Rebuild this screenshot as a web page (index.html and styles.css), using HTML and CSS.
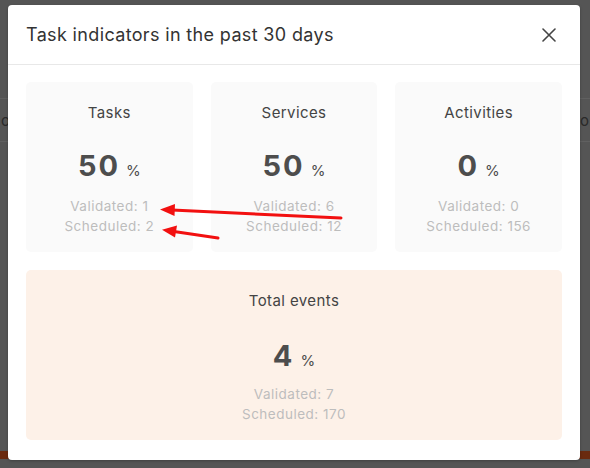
FILE: index.html
```html
<!DOCTYPE html>
<html lang="en">
<head>
<meta charset="utf-8">
<title>Task indicators</title>
<link rel="stylesheet" href="styles.css">
</head>
<body>
<div class="backdrop">
  <div class="bg-top"></div>
  <div class="bg-row"><span class="bg-text-left">oc</span><span class="bg-text-right">o</span></div>
  <div class="bg-fill"></div>
  <div class="bg-band"></div>
</div>

<div class="modal">
  <div class="modal-header">
    <h1 class="modal-title">Task indicators in the past 30 days</h1>
    <button class="close-btn" aria-label="Close">
      <svg width="14" height="14" viewBox="0 0 14 14"><path d="M1 1 L13 13 M13 1 L1 13" stroke="#444" stroke-width="1.6" fill="none" stroke-linecap="round"/></svg>
    </button>
  </div>
  <div class="modal-body">
    <div class="card">
      <div class="card-title">Tasks</div>
      <div class="card-value"><span class="num">50</span><span class="pct">%</span></div>
      <div class="card-stat">Validated: 1</div>
      <div class="card-stat">Scheduled: 2</div>
    </div>
    <div class="card">
      <div class="card-title">Services</div>
      <div class="card-value"><span class="num">50</span><span class="pct">%</span></div>
      <div class="card-stat">Validated: 6</div>
      <div class="card-stat">Scheduled: 12</div>
    </div>
    <div class="card">
      <div class="card-title">Activities</div>
      <div class="card-value"><span class="num">0</span><span class="pct">%</span></div>
      <div class="card-stat">Validated: 0</div>
      <div class="card-stat">Scheduled: 156</div>
    </div>
    <div class="card card-total">
      <div class="card-title">Total events</div>
      <div class="card-value"><span class="num">4</span><span class="pct">%</span></div>
      <div class="card-stat">Validated: 7</div>
      <div class="card-stat">Scheduled: 170</div>
    </div>
  </div>
</div>

<svg class="annotations" width="590" height="468" viewBox="0 0 590 468">
  <g stroke="#f21010" stroke-width="3" stroke-linecap="round" fill="#f21010">
    <line x1="341" y1="218" x2="172" y2="210"/>
    <line x1="218" y1="238" x2="174" y2="231.5"/>
  </g>
  <g fill="#f21010">
    <polygon points="160,209.5 175,204 174.5,216"/>
    <polygon points="162,229.8 177,225.5 175,237.5"/>
  </g>
</svg>
</body>
</html>
```

FILE: styles.css
```css
* { box-sizing: border-box; }

html, body {
  margin: 0;
  padding: 0;
}

body {
  width: 590px;
  height: 468px;
  overflow: hidden;
  background: #555555;
  font-family: Inter, "Open Sans", "DejaVu Sans", sans-serif;
  position: relative;
}

.backdrop {
  display: flex;
  flex-direction: column;
  height: 468px;
  overflow: hidden;
}

.bg-top {
  height: 99px;
  border-bottom: 1px solid #606060;
}

.bg-row {
  height: 43px;
  border-bottom: 1px solid #606060;
  display: flex;
  justify-content: space-between;
  align-items: center;
  font-size: 15px;
  color: #2a2a2a;
  padding: 0 1px;
}

.bg-fill { flex: 1; }

.bg-band {
  height: 8px;
  background: #6a2a0f;
  margin-bottom: 9px;
}

.modal {
  position: absolute;
  left: 8px;
  top: 5px;
  width: 572px;
  height: 455px;
  background: #ffffff;
  border-radius: 4px;
  box-shadow: 0 1px 3px rgba(0,0,0,0.25);
  display: flex;
  flex-direction: column;
}

.modal-header {
  height: 60px;
  border-bottom: 1px solid #e8e8e8;
  display: flex;
  align-items: center;
  justify-content: space-between;
  padding: 0 24px 0 18px;
}

.modal-title {
  margin: 0;
  font-size: 18px;
  font-weight: 400;
  color: #333333;
  letter-spacing: 0.35px;
}

.close-btn {
  border: 0;
  background: none;
  padding: 0;
  width: 14px;
  height: 14px;
  display: flex;
}

.modal-body {
  padding: 17px 18px 18px;
  display: grid;
  grid-template-columns: repeat(3, 1fr);
  gap: 18px;
}

.card {
  background: #fafafa;
  border-radius: 5px;
  height: 170px;
  padding-top: 22px;
  display: flex;
  flex-direction: column;
  align-items: center;
}

.card-total {
  grid-column: 1 / -1;
  background: #fdf1e8;
}

.card-title {
  font-size: 15px;
  line-height: 18px;
  color: #444444;
  letter-spacing: 0.4px;
}

.card-value {
  margin-top: 27px;
  height: 34px;
  display: flex;
  align-items: baseline;
  gap: 6px;
  color: #4d4d4d;
}

.card-total .card-value { margin-top: 29px; margin-bottom: -2px; }

.num {
  font-size: 29px;
  line-height: 34px;
  font-weight: 700;
  letter-spacing: 2px;
}

.pct {
  font-size: 15px;
  line-height: 34px;
}

.card-stat {
  font-size: 13.5px;
  line-height: 20px;
  color: #bdbdbd;
  letter-spacing: 0.5px;
}

.card-value + .card-stat { margin-top: 13px; }

.annotations {
  position: absolute;
  left: 0;
  top: 0;
  pointer-events: none;
}
```
